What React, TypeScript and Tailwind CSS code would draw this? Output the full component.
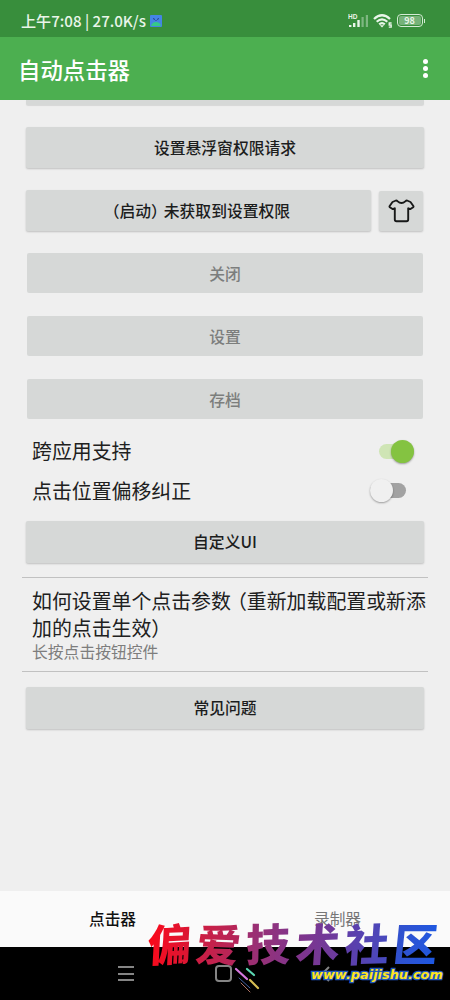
import type { ReactNode } from 'react'

function OpenParen() {
  return <span className="ml-[0.3em] [font-feature-settings:'halt']">（</span>
}

function CloseParen() {
  return <span className="mr-[0.3em] [font-feature-settings:'halt']">）</span>
}

function PanelButton({ children, className = '' }: { children: ReactNode; className?: string }) {
  return (
    <button
      className={`flex items-center justify-center rounded-[2px] bg-[#d6d8d7] text-[15.8px] leading-none font-medium text-[#1c1d1d] shadow-[0_1px_2px_rgba(0,0,0,0.2)] ${className}`}
    >
      {children}
    </button>
  )
}

function DisabledButton({ children }: { children: ReactNode }) {
  return (
    <button
      disabled
      className="mx-[27px] mb-[23px] flex h-[40px] shrink-0 items-center justify-center rounded-[2px] bg-[#d6d8d7] pt-[2px] text-[15.8px] leading-none font-medium text-[#7c7e7d]"
    >
      {children}
    </button>
  )
}

function StatusBar() {
  return (
    <header className="flex h-[37px] shrink-0 items-center bg-[#388e3c] pt-[4px] pr-[25px] pl-[21px] text-[#e9f5e9]">
      <span className="text-[15.1px] leading-none font-medium whitespace-pre">上午7:08 | 27.0K/s</span>
      <svg className="ml-[4px]" width="12" height="12" viewBox="0 0 12 12">
        <rect width="12" height="12" rx="1" fill="#4485e4" />
        <path d="M1 11 Q2 7 6 7 Q10 7 11 11Z" fill="#35c98a" />
        <path d="M3 3.5 5 4.5M9 3.5 7 4.5M6 5v1" stroke="#263b86" strokeWidth="1" />
      </svg>
      <div className="ml-auto flex items-center">
        <svg width="22" height="16" viewBox="0 0 22 16" fill="#e9f5e9">
          <text x="0" y="6" fontSize="6.5" fontWeight="700" fontFamily="Liberation Sans">HD</text>
          <rect x="1" y="12" width="2.4" height="2" />
          <rect x="5" y="10" width="2.4" height="4" />
          <rect x="9.3" y="7" width="2.4" height="7" />
          <rect x="13.5" y="4" width="2.2" height="10" opacity=".4" />
          <rect x="17.8" y="2" width="2.2" height="12" opacity=".4" />
        </svg>
        <svg className="ml-[3px]" width="20" height="16" viewBox="0 0 20 16" fill="none" stroke="#e9f5e9" strokeWidth="2.2">
          <path d="M1 6Q9 -1.5 17 6M3.7 8.8Q9 4 14.3 8.8M6.2 11.4Q9 9 11.8 11.4" />
          <path d="M6.8 12.2h4.4l-2.2 2.3z" fill="#e9f5e9" stroke="none" />
          <path d="M18.6 10h-2.4v2h2v2.2h-2.4" strokeWidth="1.3" />
        </svg>
        <div className="ml-[4px] flex h-[13px] w-[26px] items-center justify-center rounded-[4px] border-[1.5px] border-[#d4ebd5] bg-[#388e3c] p-px">
          <div className="flex h-full w-full items-center justify-center rounded-[2px] bg-[#76b279] text-[9px] leading-none font-bold">
            98
          </div>
        </div>
        <div className="ml-px h-[4px] w-[1.5px] bg-[#d4ebd5]" />
      </div>
    </header>
  )
}

const watermark = [
  { char: '偏', look: '-rotate-3 -skew-x-6 from-[#fb0717] to-[#d81634]' },
  { char: '爱', look: 'rotate-2 -skew-x-6 from-[#cf1b3f] to-[#b0265d]' },
  { char: '技', look: '-rotate-2 -skew-x-3 from-[#a02c6d] to-[#83348a]' },
  { char: '术', look: '-rotate-2 -skew-x-6 from-[#81338a] to-[#6a3b9f]' },
  { char: '社', look: '-rotate-2 -skew-x-6 from-[#5f3da8] to-[#454abf]' },
  { char: '区', look: '-skew-x-6 from-[#3250cc] to-[#1c58e2]' },
]

export default function App() {
  return (
    <div className="relative flex h-[1000px] w-[450px] flex-col overflow-hidden bg-[#efefef] font-['Noto_Sans_CJK_SC',sans-serif]">
      <StatusBar />
      <div className="flex h-[63px] shrink-0 items-center justify-between bg-[#4caf50] pr-[22px] pl-[18px] text-white">
        <h1 className="pt-px text-[22.4px] leading-none font-medium">自动点击器</h1>
        <div className="flex flex-col gap-[2px]">
          <i className="size-[5px] rounded-full bg-white" />
          <i className="size-[5px] rounded-full bg-white" />
          <i className="size-[5px] rounded-full bg-white" />
        </div>
      </div>

      <main className="flex h-[791px] shrink-0 flex-col overflow-hidden">
        <div className="mx-[26px] mb-[22px] h-[5px] shrink-0 rounded-b-[2px] bg-[#d6d8d7] shadow-[0_1px_1px_rgba(0,0,0,0.1)]" />
        <PanelButton className="mx-[26px] mb-[22px] h-[41px] shrink-0 pt-px">设置悬浮窗权限请求</PanelButton>
        <div className="mr-[27px] mb-[22px] ml-[26px] flex h-[41px] shrink-0 items-center justify-between">
          <PanelButton className="h-[41px] w-[345px]">
            <span>
              <OpenParen />启动<CloseParen />未获取到设置权限
            </span>
          </PanelButton>
          <PanelButton className="h-[40px] w-[44px]">
            <svg width="27" height="24" viewBox="0 0 27 24" fill="none" stroke="#181919" strokeWidth="1.9" strokeLinejoin="round" strokeLinecap="round">
              <path d="M8 1.5C9.6 1.2 10 4 13.5 4S17.4 1.2 19 1.5L22.5 3 25.5 7.2Q25.7 7.8 25.2 8.2L22.8 9.8Q21.6 10.3 20.2 9.3V20.5Q20.2 22.2 18.5 22.2H8.5Q6.8 22.2 6.8 20.5V9.3Q5.4 10.3 4.2 9.8L1.8 8.2Q1.3 7.8 1.5 7.2L4.5 3Z" />
            </svg>
          </PanelButton>
        </div>
        <DisabledButton>关闭</DisabledButton>
        <DisabledButton>设置</DisabledButton>
        <DisabledButton>存档</DisabledButton>

        <div className="mt-[-11px] flex h-[40px] shrink-0 items-center justify-between pr-[36px] pl-[32px] text-[19.9px] leading-none text-[#202020]">
          <span>跨应用支持</span>
          <div className="flex h-[15px] w-[35px] items-center justify-end rounded-full bg-[#cfe5b5]">
            <div className="size-[23px] shrink-0 rounded-full bg-[#84c341] shadow-[0_1px_2px_rgba(0,0,0,0.35)]" />
          </div>
        </div>
        <div className="flex h-[40px] shrink-0 items-center justify-between pr-[44px] pl-[32px] text-[19.9px] leading-none text-[#202020]">
          <span>点击位置偏移纠正</span>
          <div className="mb-px flex h-[15px] w-[36px] items-center rounded-full bg-[#a2a2a2]">
            <div className="size-[23px] shrink-0 rounded-full bg-[#f0f0f0] shadow-[0_1px_2px_rgba(0,0,0,0.35)]" />
          </div>
        </div>
        <PanelButton className="mx-[26px] mt-[10px] h-[42px] shrink-0">自定义UI</PanelButton>

        <section className="mx-[22px] mt-[14px] h-[95px] shrink-0 border-y border-[#c1c1c1] pt-[9px] pl-[10px]">
          <p className="text-[19.9px] leading-[27px] whitespace-nowrap text-[#202020]">
            如何设置单个点击参数<OpenParen />重新加载配置或新添
            <br />
            加的点击生效<CloseParen />
          </p>
          <p className="mt-px text-[15.8px] leading-[20px] text-[#7d7d7d]">长按点击按钮控件</p>
        </section>
        <PanelButton className="mx-[26px] mt-[15px] h-[42px] shrink-0">常见问题</PanelButton>
      </main>

      <nav className="grid h-[56px] shrink-0 grid-cols-2 items-center bg-[#fafafa] text-center text-[15.7px] leading-none">
        <span className="font-medium text-[#111]">点击器</span>
        <span className="text-[#777]">录制器</span>
      </nav>
      <footer className="flex h-[53px] shrink-0 items-center bg-black pl-[118px]">
        <div className="flex w-[16px] flex-col gap-[4.5px]">
          <i className="h-[2px] bg-[#858585]" />
          <i className="h-[2px] bg-[#858585]" />
          <i className="h-[2px] bg-[#858585]" />
        </div>
        <div className="ml-[81px] size-[17px] rounded-[4px] border-2 border-[#858585]" />
        <svg className="mt-[12px] ml-px" width="28" height="28" viewBox="0 0 28 28" fill="none" strokeLinecap="round">
          <path d="M3 3 14 13" stroke="#d678df" strokeWidth="2.2" />
          <path d="M14 3 21 9" stroke="#5bd8b3" strokeWidth="2.2" />
          <path d="M17 14 25 22" stroke="#d5bd53" strokeWidth="2.2" />
          <path d="M6 12 17 22" stroke="#4262a3" strokeWidth="1" />
          <path d="M8 17 17 26" stroke="#ad7262" strokeWidth="1" />
        </svg>
        <svg className="ml-[59px]" width="10" height="16" viewBox="0 0 10 16" fill="none" stroke="#858585" strokeWidth="2">
          <path d="M9 1 2 8l7 7" />
        </svg>
      </footer>

      <div className="pointer-events-none absolute top-[915px] left-[148px] flex w-[290px] flex-col">
        <div className="flex justify-between text-[44px] leading-[54px] font-black">
          {watermark.map(({ char, look }) => (
            <span key={char} className={`inline-block bg-linear-to-r bg-clip-text text-transparent ${look}`}>
              {char}
            </span>
          ))}
        </div>
        <span className="mt-[-3px] ml-[163px] text-[12.9px] font-['DejaVu_Sans','Liberation_Sans',sans-serif] leading-[18px] font-bold whitespace-nowrap text-[#ffe51d] italic [-webkit-text-stroke:2.5px_#2158bd] [paint-order:stroke_fill]">
          www.paijishu.com
        </span>
      </div>
    </div>
  )
}
